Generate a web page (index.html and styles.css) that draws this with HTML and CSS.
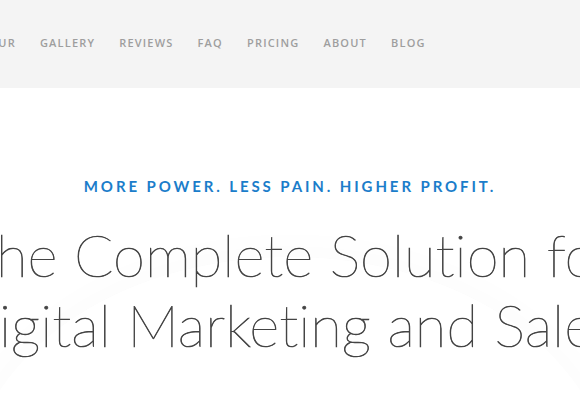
FILE: index.html
```html
<!DOCTYPE html>
<html>
<head>
<meta charset="utf-8">
<link rel="stylesheet" href="styles.css">
</head>
<body>
<header class="topbar">
  <nav class="nav">
    <a>TOUR</a>
    <a>GALLERY</a>
    <a>REVIEWS</a>
    <a>FAQ</a>
    <a>PRICING</a>
    <a>ABOUT</a>
    <a>BLOG</a>
  </nav>
</header>
<main class="hero">
  <div class="glow"></div>
  <p class="tagline">MORE POWER. LESS PAIN. HIGHER PROFIT.</p>
  <h1 class="headline">
    <span class="line">The Complete Solution for</span>
    <span class="line line-second">Digital Marketing and Sales</span>
  </h1>
</main>
</body>
</html>
```
FILE: styles.css
```css
html, body {
  margin: 0;
  padding: 0;
  background: #ffffff;
  overflow: hidden;
  width: 580px;
  height: 400px;
}
.topbar {
  height: 88px;
  background: #f4f4f4;
  display: flex;
  align-items: center;
}
.nav {
  display: flex;
  gap: 24px;
  margin-left: -19px;
  font-family: "Open Sans", sans-serif;
  font-weight: 600;
  font-size: 11px;
  letter-spacing: 1.2px;
  color: #9e9e9e;
  padding-bottom: 4px;
}
.hero {
  position: relative;
  display: flex;
  flex-direction: column;
  align-items: center;
  height: 312px;
  overflow: hidden;
}
.glow {
  position: absolute;
  left: -30px;
  top: 169px;
  width: 640px;
  height: 462px;
  border-radius: 50%;
  background: #ffffff;
  box-shadow: 0 0 40px 6px rgba(0,0,0,0.02);
  z-index: 0;
}
.tagline {
  position: relative;
  margin: 88px 0 0;
  font-family: "Lato", sans-serif;
  font-weight: 700;
  font-size: 15px;
  letter-spacing: 2.9px;
  color: #1b7dca;
  line-height: 20px;
}
.headline {
  position: relative;
  margin: 24px 0 0;
  display: flex;
  flex-direction: column;
  align-items: center;
  font-family: "Lato", sans-serif;
  font-weight: 200;
  font-size: 58px;
  line-height: 70px;
  color: #444444;
  -webkit-text-stroke: 0.7px #444444;
  white-space: nowrap;
  font-variant-ligatures: none;
}
.line {
  display: block;
}
.line-second {
  margin-right: 6px;
}
```
